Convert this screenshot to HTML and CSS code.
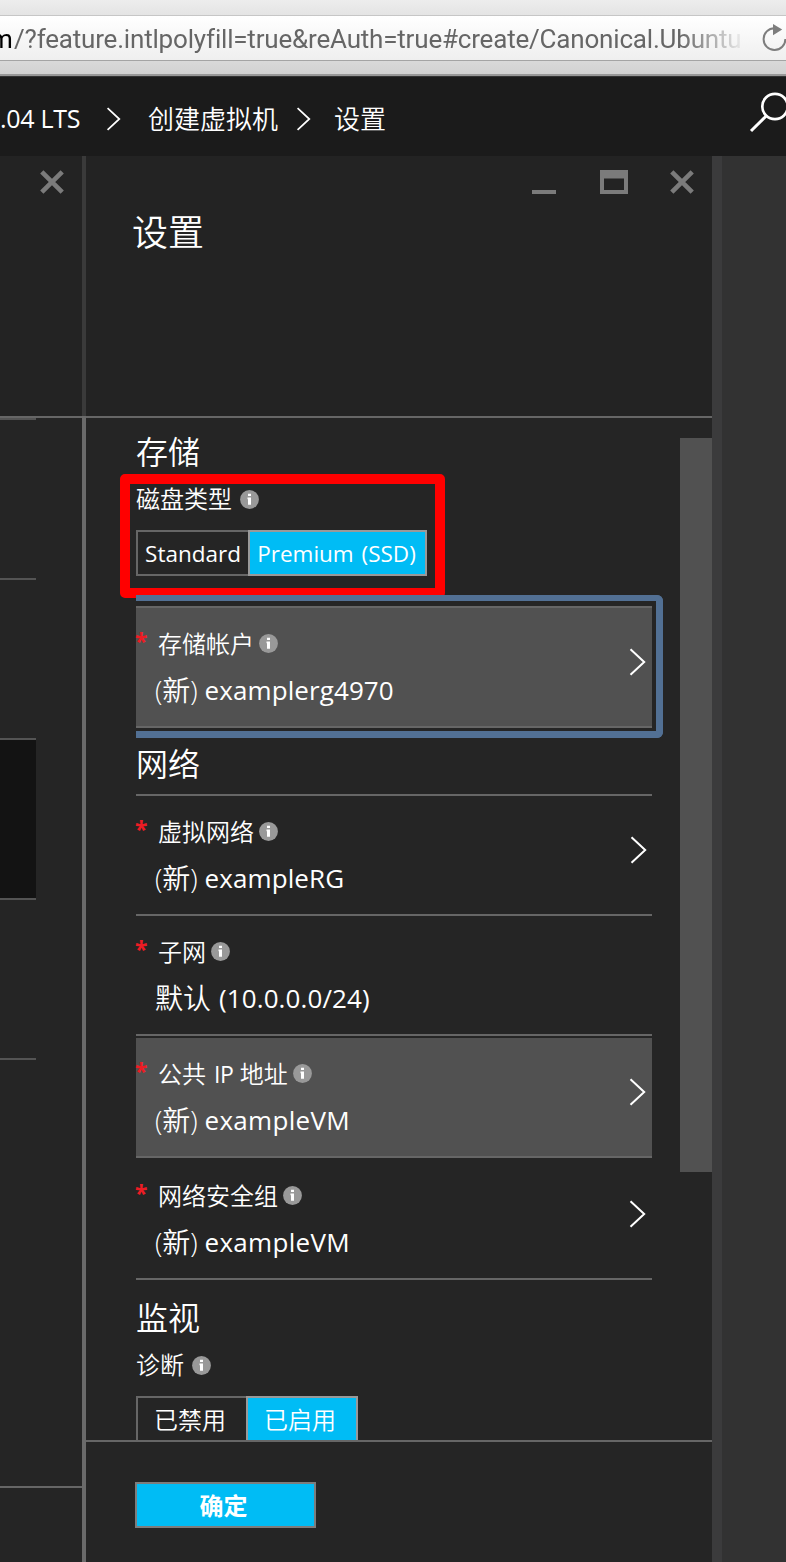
FILE: index.html
```html
<!DOCTYPE html>
<html lang="zh-CN">
<head>
<meta charset="utf-8">
<title>设置</title>
<link rel="stylesheet" href="styles.css">
</head>
<body>
<svg class="defs" width="0" height="0">
  <symbol id="info" viewBox="0 0 19 19"><circle cx="9.5" cy="9.5" r="9.4" fill="#999"/><path d="M8 3.800h3v2.3H8zM7.500 7.500H11v7.200H8V9.200h-.5z" fill="#fff"/></symbol>
  <symbol id="chevron" viewBox="0 0 18 28"><path d="M1.5 1.2 15.2 14 1.5 26.8" fill="none" stroke="#fff" stroke-width="2"/></symbol>
  <symbol id="close" viewBox="0 0 24 24"><path d="M1.8 1.8 22.2 22.2M22.2 1.8 1.8 22.2" stroke="#7b7b7b" stroke-width="4.6"/></symbol>
</svg>
<div class="browser">
  <div class="address">
    <div class="url"><span class="host">m</span><span class="path">/?feature.intlpolyfill=true&amp;reAuth=true#create/Canonical.Ubuntu</span></div>
    <svg class="reload" width="30" height="30" viewBox="0 0 30 30"><path d="M12.5 4.2A10.9 10.9 0 1 0 23.4 15" fill="none" stroke="#7d7d7d" stroke-width="2"/><path d="M11 0v11.2L20.2 5.4z" fill="#7d7d7d"/></svg>
  </div>
</div>
<header class="topbar">
  <span class="crumb crumb-os">.04 LTS</span>
  <svg class="sep sep-a" width="16" height="24"><use href="#chevron"/></svg>
  <span class="crumb">创建虚拟机</span>
  <svg class="sep sep-b" width="16" height="24"><use href="#chevron"/></svg>
  <span class="crumb">设置</span>
  <svg class="search" width="38" height="44" viewBox="0 0 38 44"><circle cx="26" cy="15.5" r="12.7" fill="none" stroke="#fff" stroke-width="2.7"/><path d="M17 25.2 2 40" stroke="#fff" stroke-width="3"/></svg>
</header>
<main class="blades">
  <section class="side">
    <div class="side-head"><svg width="24" height="24"><use href="#close"/></svg></div>
    <div class="side-list">
      <div class="step first"></div><div class="step"></div><div class="step"></div><div class="step active"></div><div class="step"></div>
    </div>
    <div class="side-foot"></div>
  </section>
  <div class="divider"></div>
  <section class="blade">
    <div class="head">
      <div class="controls">
        <svg width="26" height="28" viewBox="0 0 26 28"><path d="M1 20h24v4H1z" fill="#7b7b7b"/></svg>
        <svg width="28" height="28" viewBox="0 0 28 28"><path d="M0 0h28v24H0zM4 8.5V20h20V8.500z" fill="#7b7b7b" fill-rule="evenodd"/></svg>
        <svg width="24" height="24"><use href="#close"/></svg>
      </div>
      <h1 class="title">设置</h1>
    </div>
    <div class="body">
      <div class="content">
        <div class="highlight"></div>
        <h2 class="group">存储</h2>
        <div class="field">磁盘类型<svg width="19" height="19"><use href="#info"/></svg></div>
        <div class="toggle disk"><span class="opt std"><b>Standard</b></span><span class="opt on"><b>Premium (SSD)</b></span></div>
        <div class="focus">
          <div class="row hot top-line">
            <div class="label"><i>*</i>存储帐户<svg width="19" height="19"><use href="#info"/></svg></div>
            <div class="value"><span class="new">(<em>新</em>)</span><span class="lat">examplerg4970</span></div>
            <svg class="chev" width="18" height="28"><use href="#chevron"/></svg>
          </div>
        </div>
        <h2 class="group net">网络</h2>
        <div class="row top-line vnet">
          <div class="label"><i>*</i>虚拟网络<svg width="19" height="19"><use href="#info"/></svg></div>
          <div class="value"><span class="new">(<em>新</em>)</span><span class="lat">exampleRG</span></div>
          <svg class="chev" width="18" height="28"><use href="#chevron"/></svg>
        </div>
        <div class="row">
          <div class="label"><i>*</i>子网<svg width="19" height="19"><use href="#info"/></svg></div>
          <div class="value"><em>默认</em><span class="lat ip">(10.0.0.0/24)</span></div>
        </div>
        <div class="row hot spaced">
          <div class="label"><i>*</i>公共<span class="ipword">IP</span>地址<svg width="19" height="19"><use href="#info"/></svg></div>
          <div class="value"><span class="new">(<em>新</em>)</span><span class="lat vm">exampleVM</span></div>
          <svg class="chev" width="18" height="28"><use href="#chevron"/></svg>
        </div>
        <div class="row spaced">
          <div class="label"><i>*</i>网络安全组<svg width="19" height="19"><use href="#info"/></svg></div>
          <div class="value"><span class="new">(<em>新</em>)</span><span class="lat vm">exampleVM</span></div>
          <svg class="chev" width="18" height="28"><use href="#chevron"/></svg>
        </div>
        <h2 class="group mon">监视</h2>
        <div class="field">诊断<svg width="19" height="19"><use href="#info"/></svg></div>
        <div class="toggle diag"><span class="opt off">已禁用</span><span class="opt on">已启用</span></div>
      </div>
      <div class="scroll"></div>
    </div>
    <div class="foot"><button class="ok">确定</button></div>
  </section>
  <div class="edge"></div>
  <div class="canvas"></div>
</main>
</body>
</html>
```
FILE: styles.css
```css
* { box-sizing: border-box; }
body { margin: 0; width: 786px; height: 1562px; overflow: hidden; background: #252525; color: #fff; font-family: "Open Sans", "Noto Sans CJK SC", sans-serif; font-weight: 350; }
svg { display: block; flex: none; }
.defs { position: absolute; }
h1, h2 { margin: 0; font-weight: 350; }
.browser { height: 77px; padding-top: 15px; background: linear-gradient(#ededed 0, #e4e4e4 15px, #d9d9d9 61px, #d1d1d1 74px, #989898 74px, #989898 76px, #333 76px); }
.address { display: flex; height: 46px; border-top: 1px solid #c6c6c6; border-bottom: 1px solid #a4a4a4; background: linear-gradient(#fff, #efefef); overflow: hidden; }
.url { width: 751px; flex: none; margin-left: -10px; font: 400 26px/46px Roboto, sans-serif; letter-spacing: -.19px; white-space: nowrap; color: #666; -webkit-mask-image: linear-gradient(90deg, #000 690px, transparent 757px); mask-image: linear-gradient(90deg, #000 690px, transparent 757px); }
.host { color: #000; display: inline-block; width: 24px; }
.path { display: inline-block; }
.reload { margin: 8px 0 0 21px; }
.topbar { display: flex; align-items: center; height: 79px; padding-top: 5px; background: #1b1b1b; overflow: hidden; font-size: 26px; line-height: 38px; white-space: nowrap; }
.crumb { margin-top: -1px; }
.crumb-os { width: 106px; font-size: 25px; font-weight: 400; letter-spacing: -.3px; margin-top: -3px; }
.sep-a { margin-right: 26px; }
.sep-b { margin: 0 22px 0 18px; }
.search { margin-left: auto; margin-top: -13px; margin-right: -1px; }
.blades { display: flex; height: 1406px; }
.side { display: flex; flex-direction: column; width: 82px; flex: none; }
.side-head { height: 262px; padding: 14px 0 0 40px; background: #232323; border-bottom: 2px solid #666; }
.side-list { height: 1068px; }
.step { width: 36px; height: 160px; border-bottom: 2px solid #545454; }
.step.first { height: 2px; }
.active { background: #131313; }
.side-foot { flex: 1; border-top: 2px solid #666; }
.divider { width: 4px; flex: none; background: linear-gradient(#3a3a3a 260px, #6a6a6a 260px); }
.blade { width: 626px; flex: none; display: flex; flex-direction: column; }
.head { height: 262px; background: #232323; border-bottom: 2px solid #666; }
.controls { display: flex; justify-content: flex-end; padding: 14px 18px 0 0; height: 51px; }
.controls svg:nth-child(2) { margin: 0 42px 0 43px; }
.title { padding-left: 46px; font-size: 36px; line-height: 52px; }
.body { display: flex; height: 1022px; overflow: hidden; }
.content { position: relative; width: 594px; flex: none; padding-left: 50px; }
.highlight { position: absolute; left: 34px; top: 56px; width: 325px; height: 124px; border: 10px solid #f00; border-radius: 5px; }
.scroll { width: 32px; height: 734px; margin-top: 20px; background: #515151; }
.group { font-size: 32px; line-height: 46px; padding-top: 11px; height: 64px; }
.field { display: flex; align-items: center; gap: 8px; height: 34px; font-size: 24px; line-height: 34px; }
.toggle { display: flex; height: 46px; margin-top: 14px; font-size: 23px; line-height: 42px; }
.opt { border: 2px solid #666; text-align: center; white-space: nowrap; }
.opt b { font-weight: 400; font-size: 22.500px; word-spacing: 2px; }
.opt.on { border-color: #999; background: #00bcf5; }
.disk .std { width: 112px; border-right: 0; }
.disk .on { width: 179px; padding-right: 2px; }
.diag { font-size: 24px; line-height: 44px; }
.diag .opt { padding-right: 4px; }
.diag .off { width: 110px; border-right: 0; }
.diag .on { width: 112px; }
.focus { width: 527px; height: 143px; margin-top: 19px; padding-top: 5px; border: 6px solid #527094; border-width: 6px 7px 7px 0; border-radius: 0 6px 6px 0; background: #252525; position: relative; }
.row { display: grid; grid-template-columns: 1fr 18px; width: 516px; height: 120px; border-bottom: 2px solid #666; padding: 20px 5px 0 0; align-content: start; }
.top-line { border-top: 2px solid #666; height: 122px; }
.vnet { padding-right: 4px; }
.hot { background: #515151; }
.spaced { margin-top: 2px; }
.label { grid-column: 1; display: flex; align-items: center; height: 32px; font-size: 24px; line-height: 32px; white-space: nowrap; }
.label i { width: 22px; margin-left: -1px; margin-right: 1px; font: 700 23px/26px "Noto Sans", sans-serif; color: #ed1c24; height: 32px; }
.label svg { margin-left: 5px; margin-top: -2px; }
.ipword { margin: 0 6px 0 8px; font-size: 23px; font-weight: 400; letter-spacing: -.3px; }
.value { grid-column: 1; display: flex; height: 32px; margin-top: 14px; padding-left: 19px; font-size: 26px; line-height: 32px; white-space: nowrap; }
.value em { font-style: normal; font-size: 28px; }
.new { width: 49.500px; font-size: 27px; }
.lat { font-weight: 400; letter-spacing: .1px; }
.vm { letter-spacing: .3px; }
.ip { margin-left: 8px; }
.chev { grid-column: 2; grid-row: 1 / 3; margin-top: 20px; }
.net { height: 56px; padding-top: 3px; }
.mon { height: 68px; padding-top: 15px; }
.foot { flex: 1; border-top: 2px solid #666; padding: 40px 0 0 49px; }
.ok { display: block; width: 181px; height: 46px; padding: 1px 4px 0 0; border: 2px solid #7d7d7d; background: #00bcf5; color: #fff; font: 700 24px/42px "Noto Sans", "Noto Sans CJK SC", sans-serif; }
.edge { width: 10px; flex: none; background: #3b3b3c; }
.canvas { flex: 1; background: #323232; }
```
